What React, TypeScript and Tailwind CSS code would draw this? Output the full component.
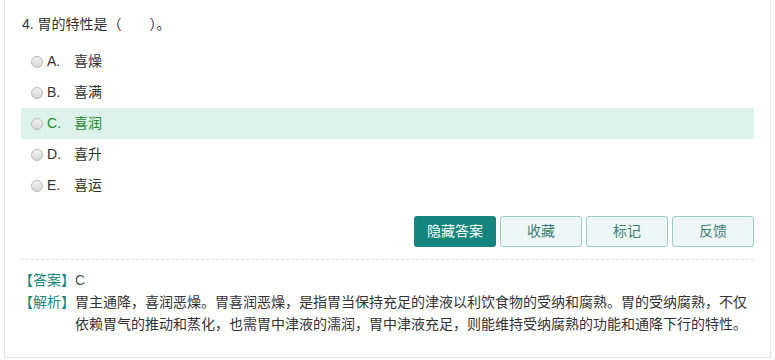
const options = [
  { key: 'A', text: '喜燥' },
  { key: 'B', text: '喜满' },
  { key: 'C', text: '喜润' },
  { key: 'D', text: '喜升' },
  { key: 'E', text: '喜运' },
];

const answer = 'C';

function Radio() {
  return (
    <span className="w-[12px] h-[12px] rounded-full border border-[#b9b9b9] bg-gradient-to-b from-[#f4f4f4] to-[#d6d6d6] shrink-0" />
  );
}

export default function App() {
  return (
    <div
      className="w-[775px] h-[360px] bg-white px-[4px] overflow-hidden text-[14px] text-[#333]"
      style={{ fontFamily: '"Liberation Sans", "Noto Sans CJK SC", sans-serif' }}
    >
      <div className="h-[358px] border border-t-0 border-[#e6e6e6] pl-[16px] pr-[16px] pt-[14px]">
        <div className="leading-[20px] pl-[1px]">4. 胃的特性是（　　）。</div>

        <div className="mt-[12px] flex flex-col">
          {options.map((o) => {
            const right = o.key === answer;
            return (
              <div
                key={o.key}
                className={
                  'h-[31px] flex items-center pl-[10px] ' +
                  (right ? 'bg-[#dcf2ea] text-[#1f8a2e]' : '')
                }
              >
                <Radio />
                <span className="ml-[4px] w-[27px]">{o.key}.</span>
                <span>{o.text}</span>
              </div>
            );
          })}
        </div>

        <div className="mt-[15px] flex justify-end gap-[4px]">
          <button className="w-[82px] h-[31px] rounded-[3px] bg-[#14867e] text-white">
            隐藏答案
          </button>
          <button className="w-[82px] h-[31px] rounded-[3px] bg-[#ecf7f6] border border-[#9dcbc6] text-[#3c7d77]">
            收藏
          </button>
          <button className="w-[82px] h-[31px] rounded-[3px] bg-[#ecf7f6] border border-[#9dcbc6] text-[#3c7d77]">
            标记
          </button>
          <button className="w-[82px] h-[31px] rounded-[3px] bg-[#ecf7f6] border border-[#9dcbc6] text-[#3c7d77]">
            反馈
          </button>
        </div>

        <div className="mt-[12px] border-t border-dashed border-[#e3e3e3]" />

        <div className="mt-[9px] leading-[22px] -ml-[2px]">
          <div className="flex">
            <span className="text-[#17877c] shrink-0">【答案】</span>
            <span className="text-[#555]">C</span>
          </div>
          <div className="flex">
            <span className="text-[#17877c] shrink-0">【解析】</span>
            <span>
              胃主通降，喜润恶燥。胃喜润恶燥，是指胃当保持充足的津液以利饮食物的受纳和腐熟。胃的受纳腐熟，不仅依赖胃气的推动和蒸化，也需胃中津液的濡润，胃中津液充足，则能维持受纳腐熟的功能和通降下行的特性。
            </span>
          </div>
        </div>
      </div>
    </div>
  );
}
